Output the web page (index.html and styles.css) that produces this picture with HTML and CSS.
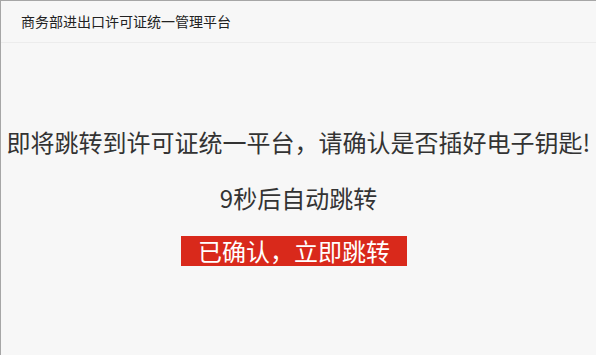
FILE: index.html
```html
<!DOCTYPE html>
<html lang="zh-CN">
<head>
<meta charset="utf-8">
<title>商务部进出口许可证统一管理平台</title>
<link rel="stylesheet" href="styles.css">
</head>
<body>
<div class="page">
  <div class="header">商务部进出口许可证统一管理平台</div>
  <div class="main">
    <p class="msg">即将跳转到许可证统一平台，请确认是否插好电子钥匙!</p>
    <p class="count">9秒后自动跳转</p>
    <div class="actions"><a class="btn" href="#">已确认，立即跳转</a></div>
  </div>
</div>
</body>
</html>
```
FILE: styles.css
```css
html, body {
  margin: 0;
  padding: 0;
  background: #f7f7f7;
}
body {
  font-family: "Noto Sans CJK SC", "Noto Sans", sans-serif;
  color: #333;
}
.page {
  height: 355px;
  box-sizing: border-box;
  border-top: 1px solid #a6a6a6;
  border-left: 1px solid #a6a6a6;
  background: #f7f7f7;
}
.header {
  height: 41px;
  line-height: 40px;
  padding-left: 20px;
  font-size: 14px;
  color: #222;
  border-bottom: 1px solid #ececec;
}
.main {
  padding-top: 83px;
  text-align: center;
}
.msg, .count {
  margin: 0;
  font-size: 24px;
  line-height: 32px;
  color: #333;
}
.count {
  margin-top: 24px;
}
.actions {
  margin-top: 22px;
}
.btn {
  display: inline-block;
  height: 30px;
  line-height: 30px;
  padding: 0 17px;
  margin-right: 9px;
  font-size: 24px;
  background: #d9291b;
  color: #fff;
  text-decoration: none;
}
```
